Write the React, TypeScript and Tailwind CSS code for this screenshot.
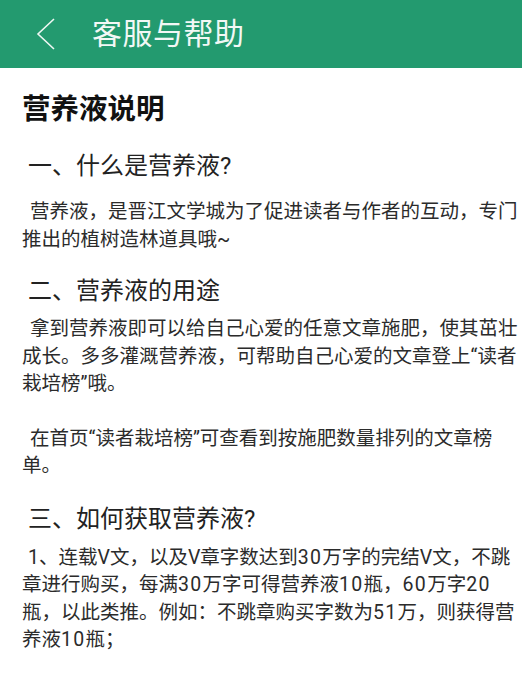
function Num({ children }: { children: string }) {
    return <span className="tracking-[1.3px]">{children}</span>;
}

export default function App() {
    const font = { fontFamily: 'Roboto, "Noto Sans CJK SC", sans-serif' };
    return (
        <div className="w-[522px] h-[677px] overflow-hidden bg-white" style={font}>
            <header className="h-[68px] bg-[#239a6f] flex items-center">
                <svg width="20" height="32" viewBox="0 0 20 32" className="ml-[36px]">
                    <polyline points="18,1 2,16 18,31" fill="none" stroke="#eef7f3" strokeWidth="1.6" />
                </svg>
                <h1 className="ml-[36px] text-[30px] leading-none text-[#f2f8f5] tracking-[0.5px]">客服与帮助</h1>
            </header>
            <main className="w-[524px] pl-[22px] text-[#2b2b2b]">
                <h2 className="mt-[24px] text-[28.5px] leading-[36px] font-bold text-[#111]">营养液说明</h2>
                <h3 className="mt-[22px] pl-[6px] text-[24px] leading-[32px] text-[#222]">一、什么是营养液?</h3>
                <p className="mt-[16px] text-[19.5px] leading-[27.5px] indent-2">
                    营养液，是晋江文学城为了促进读者与作者的互动，专门推出的植树造林道具哦~
                </p>
                <h3 className="mt-[22px] pl-[6px] text-[24px] leading-[32px] text-[#222]">二、营养液的用途</h3>
                <p className="mt-[8px] text-[19.5px] leading-[27.5px] indent-2">
                    拿到营养液即可以给自己心爱的任意文章施肥，使其茁壮成长。多多灌溉营养液，可帮助自己心爱的文章登上“读者栽培榜”哦。
                </p>
                <p className="mt-[27px] text-[19.5px] leading-[27.5px] indent-2">
                    在首页“读者栽培榜”可查看到按施肥数量排列的文章榜单。
                </p>
                <h3 className="mt-[23px] pl-[6px] text-[24px] leading-[32px] text-[#222]">三、如何获取营养液?</h3>
                <p className="mt-[9px] text-[19.5px] leading-[27.5px] indent-1.5">
                    1、连载V文，以及V章字数达到<Num>30</Num>万字的完结V文，不跳章进行购买，每满<Num>30</Num>万字可得营养液<Num>10</Num>瓶，<Num>60</Num>万字<Num>20</Num>瓶，以此类推。例如：不跳章购买字数为<Num>51</Num>万，则获得营养液<Num>10</Num>瓶；
                </p>
            </main>
        </div>
    );
}
